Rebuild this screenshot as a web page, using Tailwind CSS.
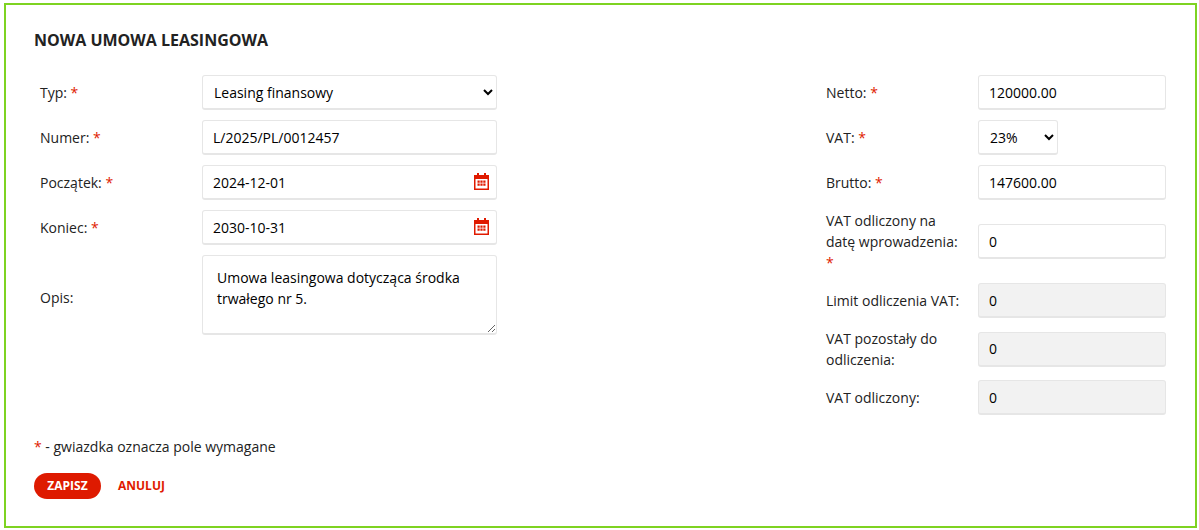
<!DOCTYPE html>
<html lang="pl">
<head>
    <meta charset="UTF-8">
    <title>Nowa umowa leasingowa</title>
    <script src="https://cdn.jsdelivr.net/npm/@tailwindcss/browser@4"></script>
</head>
<body class="bg-white font-['Open_Sans',sans-serif] text-[14px] leading-[21px] text-[#222]">
    <div class="ml-[4px] mr-[2px] mt-[3px] h-[525px] border-2 border-[#7ed321] px-[28px] pt-[24px]">
        <h1 class="text-[16px] leading-[22px] font-bold uppercase text-[#222]">Nowa umowa leasingowa</h1>

        <div class="mt-[24px] flex justify-between pl-[6px] pr-[1px]">
            <!-- lewa kolumna -->
            <div class="flex flex-col gap-[10px]">
                <div class="flex items-center">
                    <label class="w-[162px]">Typ: <span class="text-[#e01a00]">*</span></label>
                    <select class="h-[35px] w-[295px] rounded-[3px] border border-b-2 border-[#e6e6e6] bg-white pl-[7px] text-black">
                        <option>Leasing finansowy</option>
                    </select>
                </div>
                <div class="flex items-center">
                    <label class="w-[162px]">Numer: <span class="text-[#e01a00]">*</span></label>
                    <input type="text" value="L/2025/PL/0012457" class="h-[35px] w-[295px] rounded-[3px] border border-b-2 border-[#e6e6e6] px-[10px] text-black">
                </div>
                <div class="flex items-center">
                    <label class="w-[162px]">Początek: <span class="text-[#e01a00]">*</span></label>
                    <div class="relative">
                        <input type="text" value="2024-12-01" class="block h-[35px] w-[295px] rounded-[3px] border border-b-2 border-[#e6e6e6] px-[10px] text-black">
                        <svg class="absolute right-[8px] top-[8px] h-[17px] w-[15px]" viewBox="0 0 15 17" fill="none">
                            <path d="M3 0h2v2h5V0h2v2h3v15H0V2h3z" fill="#e01a00"/>
                            <rect x="1.5" y="6" width="12" height="9.5" fill="#fff"/>
                            <path d="M3.5 7.5h2.2v2.2H3.5zM6.4 7.5h2.2v2.2H6.4zM9.3 7.5h2.2v2.2H9.3zM3.5 10.5h2.2v2.2H3.5zM6.4 10.5h2.2v2.2H6.4zM9.3 10.5h2.2v2.2H9.3z" fill="#e01a00"/>
                        </svg>
                    </div>
                </div>
                <div class="flex items-center">
                    <label class="w-[162px]">Koniec: <span class="text-[#e01a00]">*</span></label>
                    <div class="relative">
                        <input type="text" value="2030-10-31" class="block h-[35px] w-[295px] rounded-[3px] border border-b-2 border-[#e6e6e6] px-[10px] text-black">
                        <svg class="absolute right-[8px] top-[8px] h-[17px] w-[15px]" viewBox="0 0 15 17" fill="none">
                            <path d="M3 0h2v2h5V0h2v2h3v15H0V2h3z" fill="#e01a00"/>
                            <rect x="1.5" y="6" width="12" height="9.5" fill="#fff"/>
                            <path d="M3.5 7.5h2.2v2.2H3.5zM6.4 7.5h2.2v2.2H6.4zM9.3 7.5h2.2v2.2H9.3zM3.5 10.5h2.2v2.2H3.5zM6.4 10.5h2.2v2.2H6.4zM9.3 10.5h2.2v2.2H9.3z" fill="#e01a00"/>
                        </svg>
                    </div>
                </div>
                <div class="flex items-center">
                    <label class="mt-[4px] w-[162px]">Opis:</label>
                    <textarea class="block h-[80px] w-[295px] rounded-[3px] border border-b-2 border-[#e6e6e6] px-[14px] pt-[11px] text-black">Umowa leasingowa dotycząca środka trwałego nr 5.</textarea>
                </div>
            </div>

            <!-- prawa kolumna -->
            <div class="flex flex-col gap-[10px]">
                <div class="flex items-center">
                    <label class="w-[152px]">Netto: <span class="text-[#e01a00]">*</span></label>
                    <input type="text" value="120000.00" class="h-[35px] w-[188px] rounded-[3px] border border-b-2 border-[#e6e6e6] px-[10px] text-black">
                </div>
                <div class="flex items-center">
                    <label class="w-[152px]">VAT: <span class="text-[#e01a00]">*</span></label>
                    <select class="h-[35px] w-[80px] rounded-[3px] border border-b-2 border-[#e6e6e6] bg-white pl-[7px] text-black">
                        <option>23%</option>
                    </select>
                </div>
                <div class="flex items-center">
                    <label class="w-[152px]">Brutto: <span class="text-[#e01a00]">*</span></label>
                    <input type="text" value="147600.00" class="h-[35px] w-[188px] rounded-[3px] border border-b-2 border-[#e6e6e6] px-[10px] text-black">
                </div>
                <div class="flex items-center">
                    <label class="w-[152px] pr-[10px]">VAT odliczony na datę wprowadzenia: <span class="text-[#e01a00]">*</span></label>
                    <input type="text" value="0" class="h-[35px] w-[188px] rounded-[3px] border border-b-2 border-[#e6e6e6] px-[10px] text-black">
                </div>
                <div class="flex items-center">
                    <label class="w-[152px]">Limit odliczenia VAT:</label>
                    <input type="text" value="0" disabled class="h-[35px] w-[188px] rounded-[3px] border border-b-2 border-[#e6e6e6] bg-[#f2f2f2] px-[10px] text-black">
                </div>
                <div class="flex items-center">
                    <label class="w-[152px] pr-[10px]">VAT pozostały do odliczenia:</label>
                    <input type="text" value="0" disabled class="h-[35px] w-[188px] rounded-[3px] border border-b-2 border-[#e6e6e6] bg-[#f2f2f2] px-[10px] text-black">
                </div>
                <div class="flex items-center">
                    <label class="w-[152px]">VAT odliczony:</label>
                    <input type="text" value="0" disabled class="h-[35px] w-[188px] rounded-[3px] border border-b-2 border-[#e6e6e6] bg-[#f2f2f2] px-[10px] text-black">
                </div>
            </div>
        </div>

        <p class="mt-[21px]"><span class="text-[#e01a00]">*</span> - gwiazdka oznacza pole wymagane</p>

        <div class="mt-[16px] flex items-center">
            <button class="h-[26px] w-[67px] rounded-full bg-[#de1a00] pb-[2px] text-[12px] font-bold uppercase text-white">Zapisz</button>
            <a class="-mt-[2px] ml-[17px] text-[12px] font-bold uppercase text-[#e01a00]">Anuluj</a>
        </div>
    </div>
</body>
</html>
